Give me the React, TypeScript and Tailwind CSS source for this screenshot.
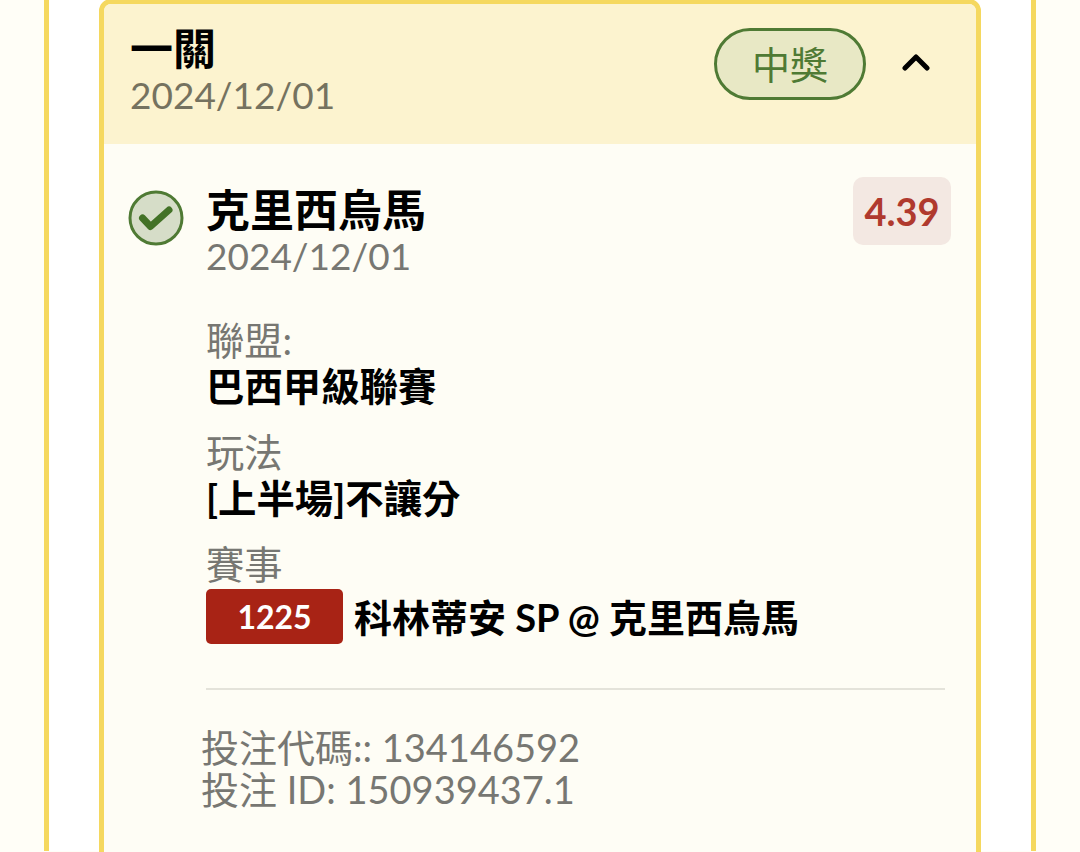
const cjk = "font-['Lato','Noto_Sans_CJK_TC',sans-serif]";

const Field = ({ label, children }: { label: string; children: React.ReactNode }) => (
  <div>
    <div className="text-[38.3px] leading-[46px] text-[#777772]">{label}</div>
    {children}
  </div>
);

const App = () => {
  return (
    <div className={`${cjk} h-[852px] w-[1080px] overflow-hidden bg-[#fffef7] px-[44px]`}>
      <div className="h-full border-x-[5px] border-[#f5d85f] bg-white px-[50px]">
        <div className="-mt-px h-[900px] overflow-hidden rounded-t-[12px] border-[5px] border-[#f5d85f] bg-[#fefdf5]">
          {/* header */}
          <div className="flex h-[140px] items-start justify-between bg-[#fcf3cf] pl-[26px] pr-[46px]">
            <div className="pt-[20px]">
              <div className="text-[43px] font-bold leading-[50px] text-black">一關</div>
              <div className="text-[37px] leading-[41px] text-[#75725f]">2024/12/01</div>
            </div>
            <div className="flex items-center gap-[36px] pt-[24px]">
              <div className="flex h-[72px] w-[152px] items-center justify-center rounded-full border-[3px] border-[#4f7a34] bg-[#e8e8c5] text-[38px] text-[#4f7a34]">
                中獎
              </div>
              <svg width="28" height="20" viewBox="0 0 28 20" fill="none" className="-mt-[4px]">
                <path d="M3 16 L14 5 L25 16" stroke="#000" strokeWidth="5" strokeLinecap="round" strokeLinejoin="round" />
              </svg>
            </div>
          </div>

          {/* selection */}
          <div className="pl-[24px] pr-[25px] pt-[33px]">
            <div className="flex items-start">
              <svg width="56" height="56" viewBox="0 0 56 56" fill="none" className="mt-[13px] shrink-0">
                <circle cx="28" cy="28" r="26" fill="#d6ddc8" stroke="#4f7a34" strokeWidth="3" />
                <path d="M14.5 28 L22.5 36.5 L41 20" stroke="#437227" strokeWidth="7" strokeLinecap="round" strokeLinejoin="round" />
              </svg>
              <div className="ml-[22px] flex-1">
                <div className="flex items-start justify-between">
                  <div>
                    <div className="pt-[8px] text-[44px] font-bold leading-[50px] text-black">克里西烏馬</div>
                    <div className="text-[37px] leading-[42px] text-[#777772]">2024/12/01</div>
                  </div>
                  <div className="flex h-[68px] w-[98px] items-center justify-center rounded-[10px] bg-[#f3e8e2] text-[38px] font-bold text-[#b03a2e]">
                    4.39
                  </div>
                </div>

                <div className="mr-[6px] mt-[40px] flex flex-col gap-[20px]">
                  <Field label="聯盟:">
                    <div className="text-[38.4px] font-bold leading-[46px] text-black">巴西甲級聯賽</div>
                  </Field>
                  <Field label="玩法">
                    <div className="text-[38.4px] font-bold leading-[46px] text-black">[上半場]不讓分</div>
                  </Field>
                  <Field label="賽事">
                    <div className="mt-[2px] flex items-center gap-[11px]">
                      <div className="flex h-[55px] w-[137px] items-center justify-center rounded-[5px] bg-[#a82315] text-[32px] font-bold text-white">
                        1225
                      </div>
                      <div className="text-[38px] font-bold leading-[46px] text-black">科林蒂安 SP @ 克里西烏馬</div>
                    </div>
                  </Field>
                </div>

                <div className="mr-[6px] mt-[44px] border-t-[2px] border-[#e4e3da]" />

                <div className="-ml-[5px] mt-[36px] text-[38px] leading-[42px] text-[#777772]">
                  <div>投注代碼:: 134146592</div>
                  <div>投注 ID: 150939437.1</div>
                </div>
              </div>
            </div>
          </div>
        </div>
      </div>
    </div>
  );
};

export default App;
